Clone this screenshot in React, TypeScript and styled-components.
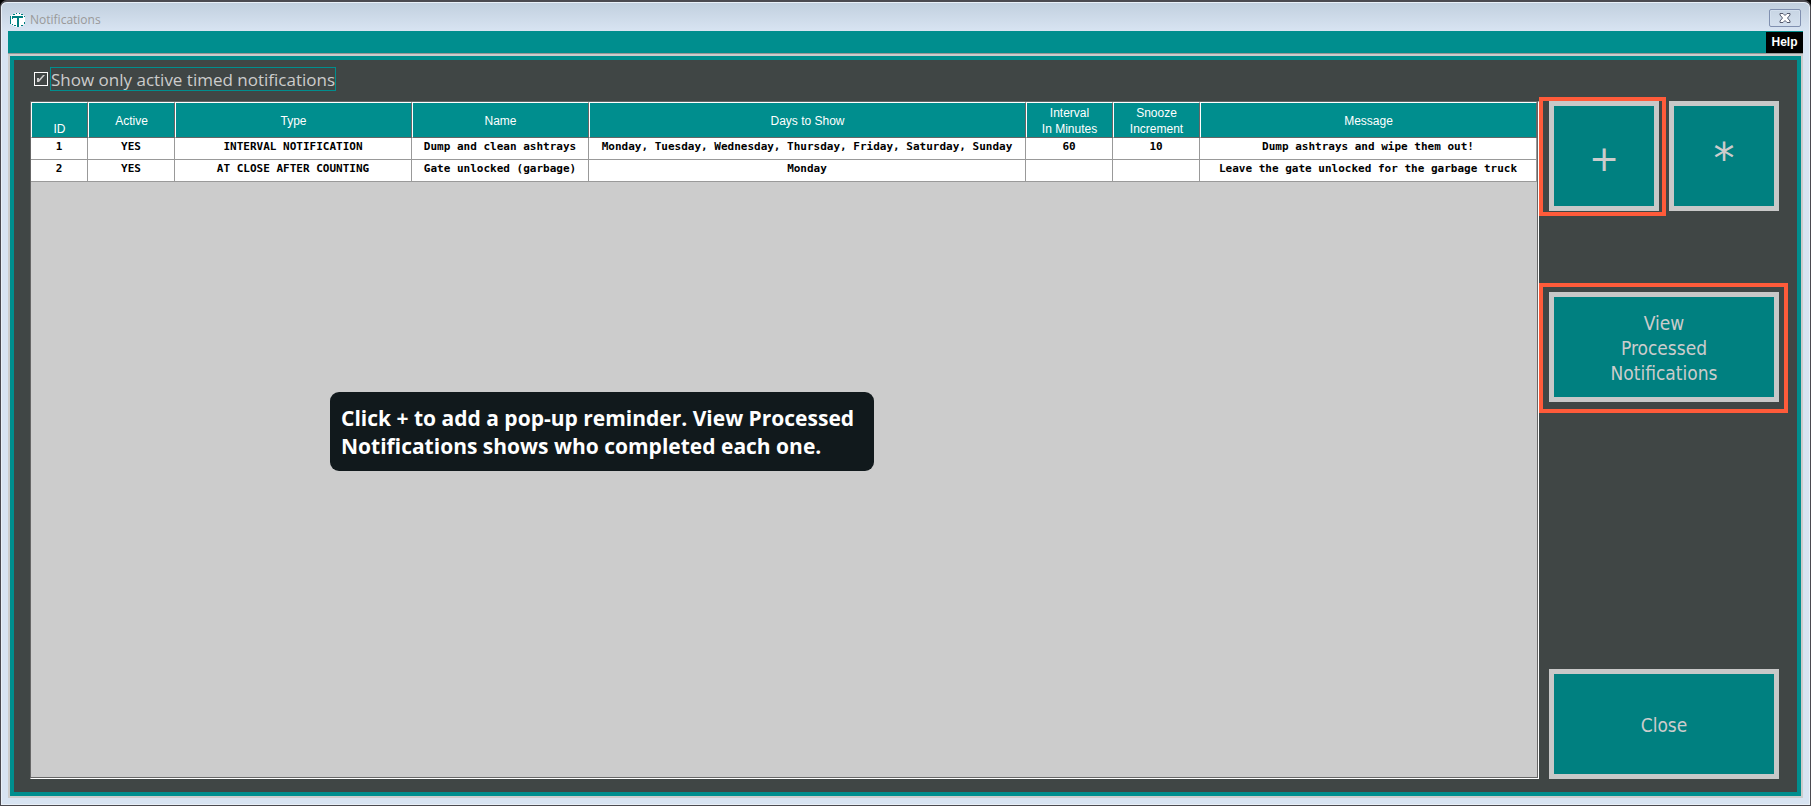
import React from "react";
import styled, { createGlobalStyle, css } from "styled-components";

const teal = "#008e8e";
const darkTeal = "#008080";
const slate = "#404645";
const silver = "#cccccc";
const tahoma = `"DejaVu Sans Condensed", "DejaVu Sans", sans-serif`;
const arial = `"Liberation Sans", Arial, sans-serif`;
const segoe = `"Open Sans", "Noto Sans", sans-serif`;

const GlobalStyle = createGlobalStyle`
  *, *::before, *::after { box-sizing: border-box; }
  body { margin: 0; background: #000; }
  button { cursor: pointer; }
`;

const Window = styled.main`
  display: flex;
  flex-direction: column;
  min-height: 100vh;
  padding: 0 6px 6px;
  border: 1px solid #4b4a50;
  border-top-width: 2px;
  border-radius: 7px 7px 0 0;
  background: linear-gradient(#c1cfde, #d8e4f2 29px);
  box-shadow: inset 0 0 0 1px #e9f0f8;
`;

const TitleBar = styled.header`
  display: flex;
  align-items: center;
  gap: 5px;
  height: 29px;
  padding: 6px 3px 0 3px;
`;

const Title = styled.h1`
  flex: 1;
  margin: 0;
  color: #999;
  font: 400 12px/16px ${segoe};
`;

const CloseBox = styled.button`
  display: flex;
  align-items: center;
  justify-content: center;
  width: 32px;
  height: 18px;
  margin-bottom: 3px;
  padding: 0;
  border: 1px solid #8090b0;
  border-radius: 2px;
  background: transparent;
  box-shadow: inset 0 0 0 1px #d3dfed;
`;

const Client = styled.div`
  flex: 1;
  display: flex;
  flex-direction: column;
  margin: 0 1px 1px;
`;

const MenuBar = styled.nav`
  display: flex;
  justify-content: flex-end;
  height: 23px;
  padding-top: 1px;
  border-bottom: 1px solid #999;
  background: ${teal};
`;

const MenuItem = styled.button`
  width: 37px;
  padding: 0;
  border: 0;
  background: #000;
  color: #fff;
  font: 700 12px/21px ${arial};
`;

const Frame = styled.div`
  flex: 1;
  display: flex;
  padding: 2px;
  background: ${silver};
`;

const Panel = styled.div`
  flex: 1;
  display: flex;
  flex-direction: column;
  gap: 10px;
  min-width: 0;
  padding: 7px 18px 13px 16px;
  border: 4px solid ${teal};
  background: ${slate};
`;

const Filter = styled.div`
  display: flex;
  align-items: center;
  gap: 2px;
  padding-left: 4px;
`;

const CheckWrap = styled.span`
  position: relative;
  display: flex;
  width: 14px;
  height: 14px;
  svg {
    position: absolute;
    inset: 0;
    pointer-events: none;
    visibility: hidden;
  }
  input:checked + svg {
    visibility: visible;
  }
`;

const Checkbox = styled.input`
  appearance: none;
  width: 14px;
  height: 14px;
  margin: 0;
  border: 1px solid #fff;
  background: ${slate};
`;

const FilterLabel = styled.label`
  height: 24px;
  min-width: 286px;
  border: 1px solid ${teal};
  color: ${silver};
  font: 400 17px/23px ${segoe};
`;

const Content = styled.div`
  flex: 1;
  display: flex;
  gap: 10px;
`;

const GridPane = styled.section`
  position: relative;
  flex: 1;
  min-width: 0;
  padding: 0 1px 1px 0;
  border: 1px solid #666;
  border-right-color: #fff;
  border-bottom-color: #fff;
  background: ${silver};
  box-shadow: inset -1px -1px #666;
`;

const Table = styled.table`
  width: 100%;
  table-layout: fixed;
  border-collapse: separate;
  border-spacing: 0;
`;

const Head = styled.th<{ $width?: number }>`
  width: ${(p) => (p.$width ? `${p.$width}px` : "auto")};
  height: 36px;
  padding: 2px 0 0;
  border: 1px solid #fff;
  border-right-color: #666;
  border-bottom-color: #666;
  background: ${teal};
  color: #fff;
  font: 400 12px/16px ${arial};
`;

const Cell = styled.td`
  height: 22px;
  padding: 0;
  border-right: 1px solid #999;
  border-bottom: 1px solid #999;
  background: #fff;
  color: #000;
  text-align: center;
  vertical-align: top;
  white-space: nowrap;
  font: 700 11px/17px "DejaVu Sans Mono", monospace;
`;

const Callout = styled.p`
  position: absolute;
  left: 299px;
  top: 290px;
  margin: 0;
  padding: 12px 11px 11px;
  width: 544px;
  border-radius: 9px;
  background: #11191c;
  color: #fff;
  white-space: nowrap;
  font: 700 21px/28px ${segoe};
`;

const Side = styled.aside`
  display: flex;
  flex-direction: column;
  width: 230px;
`;

const IconRow = styled.div`
  display: grid;
  grid-template-columns: 110px 110px;
  gap: 10px;
  margin-bottom: 81px;
`;

const Slot = styled.div<{ $mark?: string; $bottom?: boolean }>`
  position: relative;
  display: flex;
  ${(p) => p.$bottom && "margin-top: auto;"}
  ${(p) =>
    p.$mark &&
    css`
      &::after {
        content: "";
        position: absolute;
        inset: ${p.$mark};
        border: 4px solid #ff5b3a;
        pointer-events: none;
      }
    `}
`;

const Tile = styled.button`
  flex: 1;
  height: 110px;
  padding: 2px 0 0;
  border: 5px solid #c8c8c8;
  background: ${darkTeal};
  color: ${silver};
  font: 400 19px/25px ${tahoma};
`;

const SymbolTile = styled(Tile)<{ $size: number }>`
  padding-top: 6px;
  font: 400 ${(p) => p.$size}px/48px "DejaVu Sans", sans-serif;
`;

const columns: { lines: string[]; width?: number }[] = [
  { lines: ["\u00a0", "ID"], width: 57 },
  { lines: ["Active"], width: 87 },
  { lines: ["Type"], width: 237 },
  { lines: ["Name"], width: 177 },
  { lines: ["Days to Show"], width: 437 },
  { lines: ["Interval", "In Minutes"], width: 87 },
  { lines: ["Snooze", "Increment"], width: 87 },
  { lines: ["Message"] },
];

const rows = [
  ["1", "YES", "INTERVAL NOTIFICATION", "Dump and clean ashtrays", "Monday, Tuesday, Wednesday, Thursday, Friday, Saturday, Sunday", "60", "10", "Dump ashtrays and wipe them out!"],
  ["2", "YES", "AT CLOSE AFTER COUNTING", "Gate unlocked (garbage)", "Monday", "", "", "Leave the gate unlocked for the garbage truck"],
];

const Logo = () => (
  <svg width="15" height="14" viewBox="0 0 15 14" aria-hidden="true">
    <path d="M6 0h4l5 3v8l-5 3H6l-6-3V3z" fill="#fff" />
    <path
      d="M.5 3v8M3 1.500h2M6 .5h1M9 .5h1M11 1.500h2M14.500 3v1M14.500 9v2M2 11.500h1M4 12.500h2M7 13.500h2M11 12.500h2"
      fill="none"
      stroke={darkTeal}
    />
    <path d="M2 3h11v2H9v8H7V5H3v1H2z" fill={darkTeal} />
  </svg>
);

const Cross = () => (
  <svg width="12" height="10" viewBox="0 0 12 10" aria-hidden="true">
    <path d="M1 .5h3l2 2 2-2h3v1.500L8.500 5 11 8v1.500H8l-2-2-2 2H1V8l2.500-3L1 2z" fill="#fff" stroke="#545a6e" />
  </svg>
);

const Tick = () => (
  <svg width="14" height="14" viewBox="0 0 14 14" aria-hidden="true">
    <path d="M3 6v4h2l6-7h-2L5 7.500V6z" fill={silver} />
  </svg>
);

export default function App() {
  return (
    <>
      <GlobalStyle />
      <Window>
        <TitleBar>
          <Logo />
          <Title>Notifications</Title>
          <CloseBox type="button" aria-label="Close window">
            <Cross />
          </CloseBox>
        </TitleBar>
        <Client>
          <MenuBar>
            <MenuItem type="button">Help</MenuItem>
          </MenuBar>
          <Frame>
            <Panel>
              <Filter>
                <CheckWrap>
                  <Checkbox id="active-only" type="checkbox" defaultChecked />
                  <Tick />
                </CheckWrap>
                <FilterLabel htmlFor="active-only">Show only active timed notifications</FilterLabel>
              </Filter>
              <Content>
                <GridPane>
                  <Table>
                    <thead>
                      <tr>
                        {columns.map((c) => (
                          <Head key={c.lines.join("")} scope="col" $width={c.width}>
                            {c.lines.map((line, i) => (
                              <React.Fragment key={line}>
                                {i > 0 && <br />}
                                {line}
                              </React.Fragment>
                            ))}
                          </Head>
                        ))}
                      </tr>
                    </thead>
                    <tbody>
                      {rows.map((row) => (
                        <tr key={row[0]}>
                          {row.map((value, i) => (
                            <Cell key={i}>{value}</Cell>
                          ))}
                        </tr>
                      ))}
                    </tbody>
                  </Table>
                  <Callout>
                    Click + to add a pop-up reminder. View Processed
                    <br />
                    Notifications shows who completed each one.
                  </Callout>
                </GridPane>
                <Side>
                  <IconRow>
                    <Slot $mark="-4px -7px -5px -10px">
                      <SymbolTile type="button" $size={36}>+</SymbolTile>
                    </Slot>
                    <Slot>
                      <SymbolTile type="button" $size={42}>*</SymbolTile>
                    </Slot>
                  </IconRow>
                  <Slot $mark="-9px -9px -11px -10px">
                    <Tile type="button">
                      View
                      <br />
                      Processed
                      <br />
                      Notifications
                    </Tile>
                  </Slot>
                  <Slot $bottom>
                    <Tile type="button">Close</Tile>
                  </Slot>
                </Side>
              </Content>
            </Panel>
          </Frame>
        </Client>
      </Window>
    </>
  );
}
